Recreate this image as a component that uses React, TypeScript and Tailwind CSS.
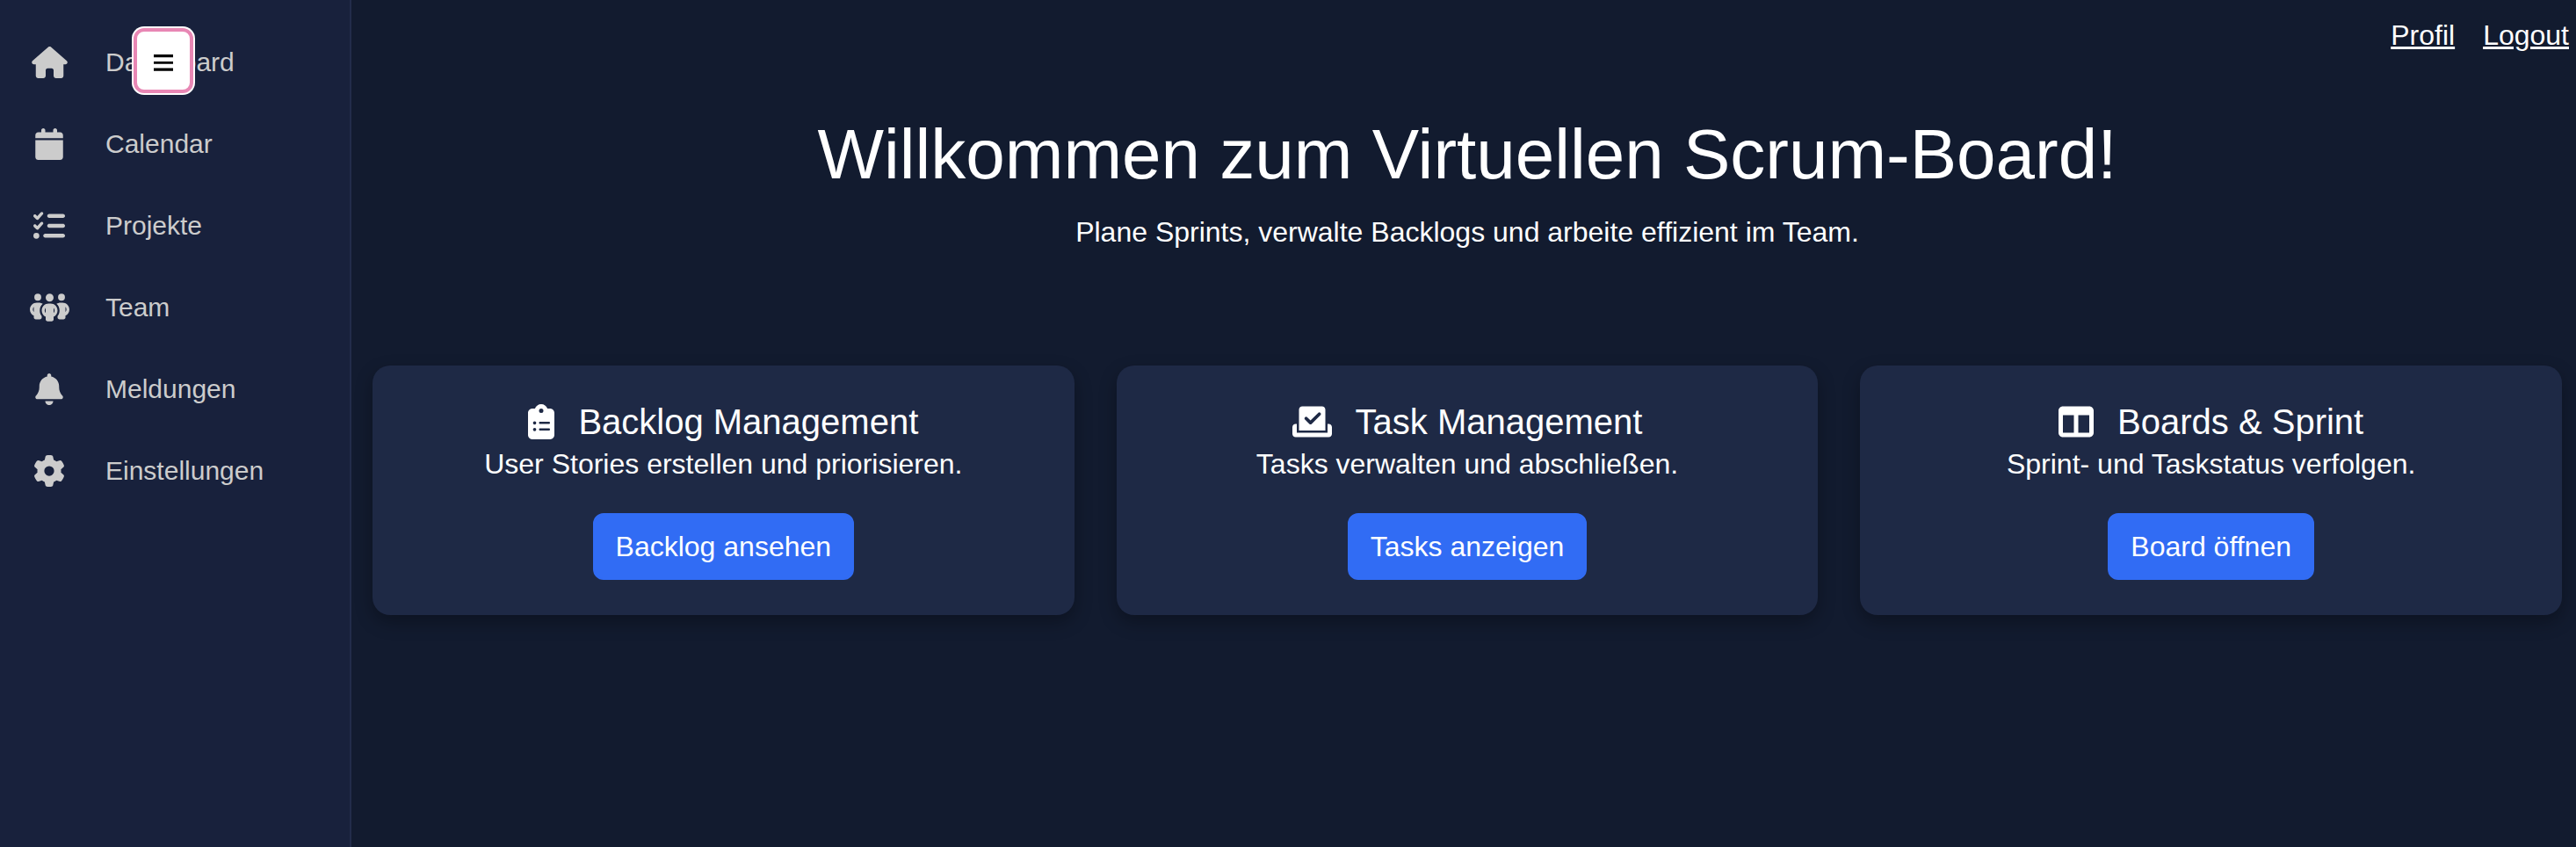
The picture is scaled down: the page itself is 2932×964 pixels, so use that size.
import { useState } from 'react';
import type { IconType } from 'react-icons';
import {
  FaBell,
  FaCalendar,
  FaCheckToSlot,
  FaClipboardList,
  FaGear,
  FaHouse,
  FaListCheck,
  FaPeopleGroup,
  FaTableColumns,
} from 'react-icons/fa6';

type NavItem = { label: string; icon: IconType; iconWidth: string };
type Feature = { title: string; text: string; action: string; icon: IconType; iconWidth: string };

const navItems: NavItem[] = [
  { label: 'Dashboard', icon: FaHouse, iconWidth: 'w-[41px]' },
  { label: 'Calendar', icon: FaCalendar, iconWidth: 'w-8' },
  { label: 'Projekte', icon: FaListCheck, iconWidth: 'w-9' },
  { label: 'Team', icon: FaPeopleGroup, iconWidth: 'w-[45px]' },
  { label: 'Meldungen', icon: FaBell, iconWidth: 'w-8' },
  { label: 'Einstellungen', icon: FaGear, iconWidth: 'w-9' },
];

const features: Feature[] = [
  {
    title: 'Backlog Management',
    text: 'User Stories erstellen und priorisieren.',
    action: 'Backlog ansehen',
    icon: FaClipboardList,
    iconWidth: 'w-[30px]',
  },
  {
    title: 'Task Management',
    text: 'Tasks verwalten und abschließen.',
    action: 'Tasks anzeigen',
    icon: FaCheckToSlot,
    iconWidth: 'w-[45px]',
  },
  {
    title: 'Boards & Sprint',
    text: 'Sprint- und Taskstatus verfolgen.',
    action: 'Board öffnen',
    icon: FaTableColumns,
    iconWidth: 'w-10',
  },
];

function Sidebar() {
  return (
    <aside className="w-[400px] shrink-0 border-r-2 border-[#222c4a] bg-[#18213c] py-6">
      <nav>
        <ul>
          {navItems.map(({ label, icon: Icon, iconWidth }) => (
            <li key={label}>
              <a href="#" className="flex items-center gap-8 px-6 py-6 text-[30px] leading-[45px] text-[#cccccc]">
                <span className="flex w-16 justify-center">
                  <Icon className={`h-9 ${iconWidth}`} />
                </span>
                {label}
              </a>
            </li>
          ))}
        </ul>
      </nav>
    </aside>
  );
}

function FeatureCard({ title, text, action, icon: Icon, iconWidth }: Feature) {
  return (
    <article className="flex flex-col items-center rounded-[20px] bg-[#1e2945] p-10 text-center shadow-[0_8px_20px_rgba(0,0,0,0.3)]">
      <h2 className="flex items-center gap-[27px] text-[40px] leading-[48px]">
        <Icon className={`h-10 ${iconWidth}`} />
        {title}
      </h2>
      <p>{text}</p>
      <button type="button" className="mt-8 rounded-xl border-2 border-[#316cf4] bg-[#316cf4] px-6 py-3">
        {action}
      </button>
    </article>
  );
}

export default function App() {
  const [open, setOpen] = useState(true);

  return (
    <div className="relative flex min-h-screen bg-[#121b2f] font-['Liberation_Sans',Arial,sans-serif] text-[32px] leading-[48px] text-white">
      {open && <Sidebar />}
      <button
        type="button"
        aria-label="Menü"
        aria-expanded={open}
        onClick={() => setOpen(!open)}
        className="absolute top-8 left-[152px] flex h-[74px] w-[68px] items-center justify-center rounded-xl border-4 border-[#e887b4] bg-white pt-1 text-black ring-2 ring-white"
      >
        <svg viewBox="0 0 22 19" className="h-[19px] w-[22px]" fill="currentColor" aria-hidden="true">
          <path d="M0 0h22v3.2H0zM0 8h22v2.8H0zM0 15.6h22v3.2H0z" />
        </svg>
      </button>
      <div className="flex min-w-0 flex-1 flex-col">
        <header className="flex justify-end gap-8 px-2 pt-4">
          <a href="#" className="underline decoration-[3px]">
            Profil
          </a>
          <a href="#" className="underline decoration-[3px]">
            Logout
          </a>
        </header>
        <main className="pr-4 pl-6">
          <section className="py-16 text-center">
            <h1 className="text-[80px] leading-[96px]">Willkommen zum Virtuellen Scrum-Board!</h1>
            <p className="mt-4">Plane Sprints, verwalte Backlogs und arbeite effizient im Team.</p>
          </section>
          <section className="grid grid-cols-3 gap-12 pt-16">
            {features.map((feature) => (
              <FeatureCard key={feature.title} {...feature} />
            ))}
          </section>
        </main>
      </div>
    </div>
  );
}
